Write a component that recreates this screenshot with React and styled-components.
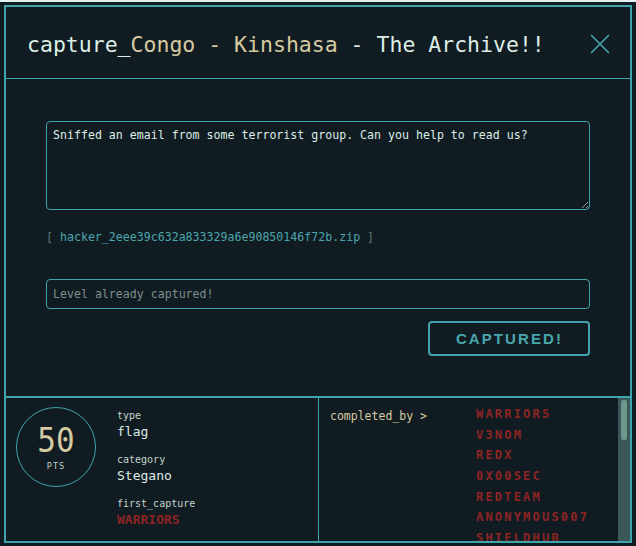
import React from "react";
import styled, { createGlobalStyle } from "styled-components";

const C = {
  bg: "#111c22",
  teal: "#40a4ac",
  tealText: "#4aa6ad",
  tan: "#d6caa2",
  white: "#dcede6",
  label: "#c3d2cb",
  red: "#8e2424",
  dim: "#5d7576",
};

const Global = createGlobalStyle`
  html, body { margin: 0; padding: 0; background: #e4f1f1; }
  body { font-family: "DejaVu Sans Mono", "Liberation Mono", monospace; }
  * { box-sizing: border-box; }
`;

const Modal = styled.div`
  margin-top: 2px;
  width: 636px;
  height: 544px;
  background: ${C.bg};
  padding: 3px 4px;
`;

const Frame = styled.div`
  height: 100%;
  border: 2px solid ${C.teal};
  display: flex;
  flex-direction: column;
`;

const Header = styled.header`
  height: 72px;
  flex: none;
  border-bottom: 1px solid ${C.teal};
  display: flex;
  align-items: center;
  justify-content: space-between;
  padding: 3px 20px 0 21px;
`;

const Title = styled.h1`
  margin: 0;
  font-weight: normal;
  font-size: 21.5px;
  color: ${C.white};
  white-space: pre;
`;

const Accent = styled.span`
  color: ${C.tan};
`;

const Close = styled.button`
  border: 0;
  background: none;
  padding: 0;
  width: 20px;
  height: 20px;
  display: flex;
  cursor: pointer;
`;

const Body = styled.section`
  flex: 1;
  padding: 42px 40px 0 40px;
  display: flex;
  flex-direction: column;
`;

const Description = styled.textarea`
  display: block;
  width: 100%;
  height: 89px;
  background: ${C.bg};
  border: 1px solid ${C.teal};
  border-radius: 4px;
  color: ${C.white};
  font-family: inherit;
  font-size: 11.6px;
  line-height: 14px;
  padding: 6px 6px;
  outline: none;
`;

const FileLine = styled.div`
  margin-top: 19px;
  font-size: 11.6px;
  line-height: 16px;
  color: ${C.dim};
  white-space: pre;
`;

const FileLink = styled.a`
  color: ${C.tealText};
  text-decoration: none;
`;

const FlagInput = styled.input`
  display: block;
  margin-top: 34px;
  width: 100%;
  height: 30px;
  background: ${C.bg};
  border: 1px solid ${C.teal};
  border-radius: 4px;
  padding: 0 6px;
  font-family: inherit;
  font-size: 11.6px;
  color: ${C.white};
  outline: none;
  &::placeholder { color: #7d8e8b; }
`;

const Actions = styled.div`
  display: flex;
  justify-content: flex-end;
  margin-top: 12px;
`;

const CaptureButton = styled.button`
  width: 162px;
  height: 35px;
  background: transparent;
  border: 2px solid ${C.teal};
  border-radius: 4px;
  color: ${C.tealText};
  font-family: "Liberation Sans", Arial, sans-serif;
  font-weight: bold;
  font-size: 15px;
  letter-spacing: 2.1px;
  padding: 0 0 0 1px;
`;

const Footer = styled.footer`
  height: 145px;
  flex: none;
  border-top: 2px solid ${C.teal};
  display: grid;
  grid-template-columns: 312px 1px 1fr;
`;

const Divider = styled.div`
  background: ${C.teal};
`;

const Stats = styled.div`
  display: flex;
  align-items: flex-start;
  padding: 9px 0 0 10px;
  gap: 21px;
`;

const Points = styled.div`
  width: 80px;
  height: 80px;
  border: 1px solid ${C.teal};
  border-radius: 50%;
  display: flex;
  flex-direction: column;
  align-items: center;
  justify-content: center;
  flex: none;
`;

const PointsValue = styled.div`
  font-size: 31px;
  line-height: 30px;
  color: ${C.tan};
  margin-top: 2px;
  transform: scaleY(1.08);
`;

const PointsUnit = styled.div`
  font-size: 8.5px;
  letter-spacing: 1px;
  color: ${C.label};
  margin-top: 6px;
`;

const Meta = styled.dl`
  margin: 0;
  padding-top: 3px;
  display: flex;
  flex-direction: column;
`;

const MetaLabel = styled.dt`
  font-size: 10px;
  line-height: 12px;
  color: ${C.label};
  margin-top: ${(p) => (p.$first ? "0" : "14px")};
`;

const MetaValue = styled.dd`
  margin: 2px 0 0 0;
  font-size: 13px;
  line-height: 16px;
  color: ${(p) => (p.$red ? C.red : C.white)};
  font-weight: ${(p) => (p.$red ? "bold" : "normal")};
`;

const CompletedPane = styled.div`
  display: grid;
  grid-template-columns: 1fr 12px;
  min-height: 0;
  overflow: hidden;
`;

const Completed = styled.div`
  overflow: hidden;
  display: flex;
  padding: 11px 0 0 11px;
`;

const ScrollTrack = styled.div`
  background: #3b5858;
  padding: 2px 3px 0 3px;
`;

const ScrollThumb = styled.div`
  height: 40px;
  background: #6d978d;
  border-radius: 2px;
`;

const CompletedLabel = styled.div`
  font-size: 11.5px;
  line-height: 14px;
  color: ${C.tan};
  width: 146px;
  flex: none;
  white-space: pre;
`;

const Teams = styled.ul`
  list-style: none;
  margin: 0;
  padding: 0;
`;

const Team = styled.li`
  font-size: 12px;
  line-height: 20.7px;
  height: 20.7px;
  font-weight: bold;
  letter-spacing: 2.2px;
  color: ${C.red};
  text-transform: uppercase;
  margin-top: ${(p) => (p.$first ? "-5px" : "0")};
`;

const teams = [
  "WARRIORS", "V3NOM", "REDX", "0X00SEC", "REDTEAM", "ANONYMOUS007", "SHIELDHUB",
];

export default function App() {
  return (
    <>
      <Global />
      <Modal>
        <Frame>
          <Header>
            <Title>
              capture_<Accent>Congo - Kinshasa</Accent> - The Archive!!
            </Title>
            <Close aria-label="close">
              <svg width="20" height="20" viewBox="0 0 20 20">
                <path d="M1 1 L19 19 M19 1 L1 19" stroke="#4aa3aa" strokeWidth="1.6" fill="none" />
              </svg>
            </Close>
          </Header>
          <Body>
            <Description
              readOnly
              defaultValue="Sniffed an email from some terrorist group. Can you help to read us?"
            />
            <FileLine>
              [ <FileLink href="#">hacker_2eee39c632a833329a6e90850146f72b.zip</FileLink> ]
            </FileLine>
            <FlagInput readOnly placeholder="Level already captured!" />
            <Actions>
              <CaptureButton>CAPTURED!</CaptureButton>
            </Actions>
          </Body>
          <Footer>
            <Stats>
              <Points>
                <PointsValue>50</PointsValue>
                <PointsUnit>PTS</PointsUnit>
              </Points>
              <Meta>
                <MetaLabel $first>type</MetaLabel>
                <MetaValue>flag</MetaValue>
                <MetaLabel>category</MetaLabel>
                <MetaValue>Stegano</MetaValue>
                <MetaLabel>first_capture</MetaLabel>
                <MetaValue $red>WARRIORS</MetaValue>
              </Meta>
            </Stats>
            <Divider />
            <CompletedPane>
              <Completed>
                <CompletedLabel>completed_by &gt;</CompletedLabel>
                <Teams>
                  {teams.map((t, i) => (
                    <Team key={t} $first={i === 0}>{t}</Team>
                  ))}
                </Teams>
              </Completed>
              <ScrollTrack>
                <ScrollThumb />
              </ScrollTrack>
            </CompletedPane>
          </Footer>
        </Frame>
      </Modal>
    </>
  );
}
